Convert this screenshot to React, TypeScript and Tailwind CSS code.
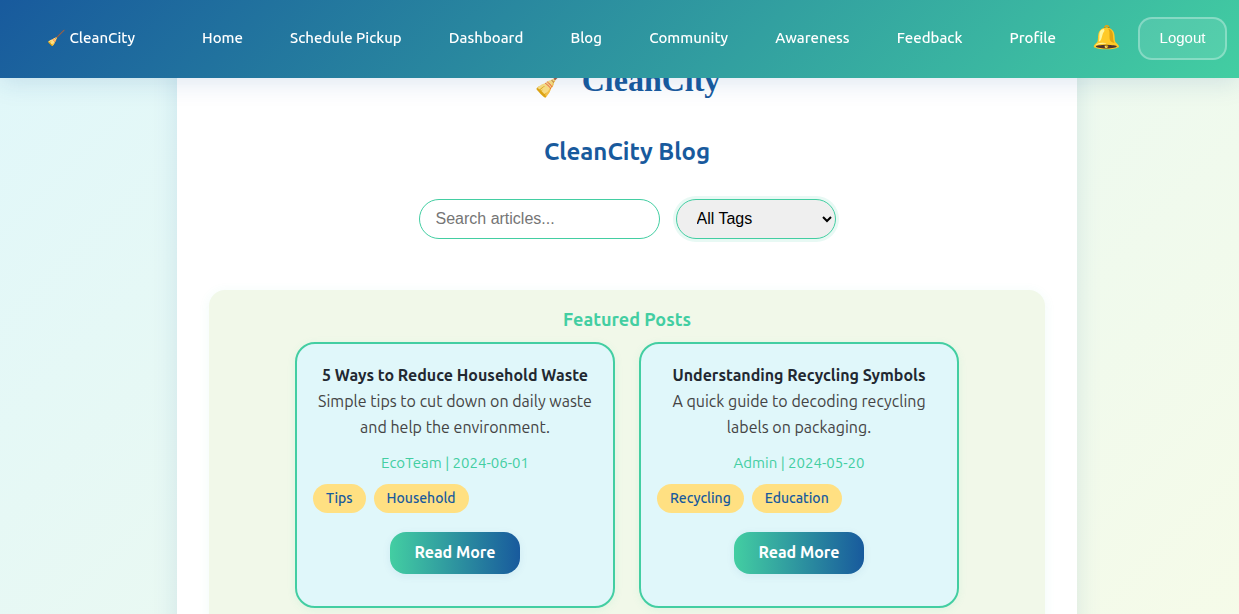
const navItems = ["Home", "Schedule Pickup", "Dashboard", "Blog", "Community", "Awareness", "Feedback", "Profile"];

type Post = { title: string; excerpt: string; author: string; date: string; tags: string[] };

const posts: Post[] = [
  {
    title: "5 Ways to Reduce Household Waste",
    excerpt: "Simple tips to cut down on daily waste and help the environment.",
    author: "EcoTeam",
    date: "2024-06-01",
    tags: ["Tips", "Household"],
  },
  {
    title: "Understanding Recycling Symbols",
    excerpt: "A quick guide to decoding recycling labels on packaging.",
    author: "Admin",
    date: "2024-05-20",
    tags: ["Recycling", "Education"],
  },
];

function PostCard({ post }: { post: Post }) {
  return (
    <article className="flex w-80 flex-col items-center rounded-[20px] border-2 border-[#43cea2] bg-[#e0f7fa] px-4 pt-[18px] pb-8 text-center shadow-[0_2px_8px_rgba(67,206,162,0.1)]">
      <h4 className="text-base leading-[26px] font-semibold whitespace-nowrap text-[#222831]">{post.title}</h4>
      <p className="text-base leading-[26px] text-[#444]">{post.excerpt}</p>
      <p className="mt-[10px] text-[15px] leading-[26px] text-[#43cea2]">
        {post.author} | {post.date}
      </p>
      <ul className="mt-2 flex gap-2 self-start">
        {post.tags.map((tag) => (
          <li key={tag} className="rounded-2xl bg-[#ffe082] px-[13px] text-sm leading-[29px] font-medium text-[#185a9d]">
            {tag}
          </li>
        ))}
      </ul>
      <button className="mt-[19px] h-[42px] w-[130px] rounded-2xl bg-[linear-gradient(90deg,#43cea2,#185a9d)] pb-[2px] text-base font-semibold text-white shadow-[0_2px_8px_rgba(24,90,157,0.08)]">
        Read More
      </button>
    </article>
  );
}

export default function App() {
  return (
    <div className="min-h-screen bg-[linear-gradient(135deg,#e0f7fa,#f6fbe8)] font-['Ubuntu','Noto_Sans',sans-serif]">
      <header className="fixed inset-x-0 top-0 z-10 flex h-[78px] items-center bg-[linear-gradient(135deg,#185a9d,#43cea2)] pr-3 pb-[2px] pl-[47px] text-[15px] font-medium text-white shadow-[0_4px_24px_rgba(24,90,157,0.15)]">
        <a href="#" className="w-[155px] shrink-0 whitespace-nowrap">
          🧹 CleanCity
        </a>
        <nav className="flex grow justify-between whitespace-nowrap">
          {navItems.map((item) => (
            <a key={item} href="#">
              {item}
            </a>
          ))}
        </nav>
        <button aria-label="Notifications" className="ml-9 shrink-0 pb-[2px] text-[23px]">
          🔔
        </button>
        <button className="ml-[17px] h-[43px] w-[89px] shrink-0 rounded-[14px] border-2 border-white/30 bg-white/10 font-['Liberation_Sans',sans-serif] font-normal">
          Logout
        </button>
      </header>
      <div className="pl-[15px]">
        <main className="mx-auto min-h-screen max-w-[900px] bg-white px-8 pt-[58px] pb-8 shadow-[0_4px_24px_rgba(24,90,157,0.12)]">
          <h1 className="flex h-11 items-center justify-center gap-2 font-['Liberation_Serif',serif] text-[32px] font-bold text-[#185a9d]">
            <span>🧹</span>
            <span>CleanCity</span>
          </h1>
          <h2 className="mt-8 text-center text-2xl leading-9 font-semibold text-[#185a9d]">CleanCity Blog</h2>
          <div className="mt-[29px] flex justify-center gap-4 font-['Liberation_Sans',sans-serif]">
            <input
              type="text"
              aria-label="Search articles"
              placeholder="Search articles..."
              className="h-10 w-[241px] rounded-[20px] border border-[#43cea2] bg-white px-4 text-base placeholder:text-[#757575]"
            />
            <select
              aria-label="Filter by tag"
              className="h-10 w-40 rounded-[20px] border border-[#43cea2] bg-[#efefef] pb-[2px] pl-4 text-base text-black shadow-[0_0_0_3px_rgba(67,206,162,0.12)]"
            >
              <option>All Tags</option>
              <option>Tips</option>
              <option>Household</option>
              <option>Recycling</option>
              <option>Education</option>
            </select>
          </div>
          <section className="mt-[51px] rounded-2xl bg-[#f1f8e9] px-4 pt-4 pb-6 shadow-[0_2px_12px_rgba(67,206,162,0.08)]">
            <h3 className="text-center text-lg leading-[26px] font-semibold text-[#43cea2]">Featured Posts</h3>
            <div className="mt-[10px] flex flex-wrap justify-center gap-6">
              {posts.map((post) => (
                <PostCard key={post.title} post={post} />
              ))}
            </div>
          </section>
        </main>
      </div>
    </div>
  );
}
